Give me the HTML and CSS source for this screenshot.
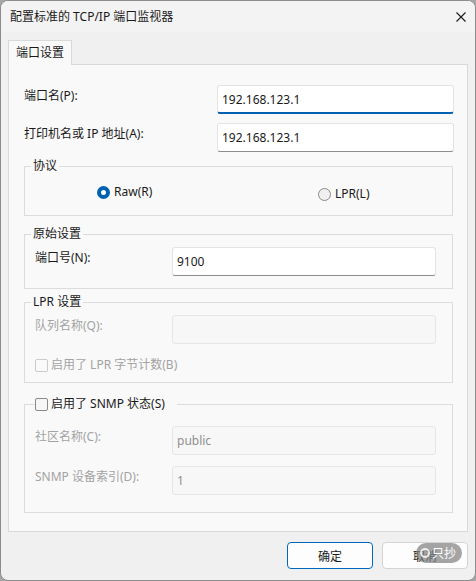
FILE: index.html
```html
<!DOCTYPE html>
<html lang="zh-CN">
<head>
  <meta charset="UTF-8">
  <meta name="viewport" content="width=device-width, initial-scale=1.0">
  <title>配置标准的 TCP/IP 端口监视器</title>
  <link rel="stylesheet" href="styles.css">
</head>
<body>
  <div class="window">
    <div class="titlebar">
      <span class="title">配置标准的 TCP/IP 端口监视器</span>
      <svg class="close" width="10" height="10" viewBox="0 0 10 10">
        <path d="M0.5 0.5 L9.5 9.5 M9.5 0.5 L0.5 9.5" stroke="#1a1a1a" stroke-width="1.1" fill="none"/>
      </svg>
    </div>

    <div class="content">
      <div class="tabs">
        <div class="tab">端口设置</div>
      </div>
      <div class="panel">
        <div class="row row-first">
          <label>端口名(P):</label>
          <div class="input focused">192.168.123.1</div>
        </div>
        <div class="row">
          <label>打印机名或 IP 地址(A):</label>
          <div class="input">192.168.123.1</div>
        </div>

        <fieldset class="group group-proto">
          <legend>协议</legend>
          <div class="radios">
            <div class="radio-item raw"><span class="radio checked"></span>Raw(R)</div>
            <div class="radio-item lpr"><span class="radio"></span>LPR(L)</div>
          </div>
        </fieldset>

        <fieldset class="group group-raw">
          <legend>原始设置</legend>
          <div class="field">
            <label>端口号(N):</label>
            <div class="input">9100</div>
          </div>
        </fieldset>

        <fieldset class="group group-lpr">
          <legend>LPR 设置</legend>
          <div class="field">
            <label class="disabled">队列名称(Q):</label>
            <div class="input disabled"></div>
          </div>
          <div class="check-row disabled"><span class="checkbox"></span>启用了 LPR 字节计数(B)</div>
        </fieldset>

        <fieldset class="group group-snmp">
          <legend><span class="checkbox"></span>启用了 SNMP 状态(S)</legend>
          <div class="field">
            <label class="disabled">社区名称(C):</label>
            <div class="input disabled">public</div>
          </div>
          <div class="field field-gap">
            <label class="disabled">SNMP 设备索引(D):</label>
            <div class="input disabled">1</div>
          </div>
        </fieldset>
      </div>

      <div class="footer">
        <button class="btn btn-default">确定</button>
        <button class="btn">取消</button>
        <div class="stamp"><span class="stamp-dot"></span>只抄</div>
      </div>
    </div>
  </div>
</body>
</html>
```

FILE: styles.css
```css
html {
  background-color: #a6a6a6;
}

body {
  margin: 0;
  font-family: "Noto Sans", "Noto Sans CJK SC", sans-serif;
  font-size: 12px;
  color: #1a1a1a;
}

.window {
  width: 476px;
  height: 581px;
  box-sizing: border-box;
  border: 1px solid #8c8c8c;
  border-radius: 8px;
  background-color: #f0f0f0;
  overflow: hidden;
}

.titlebar {
  height: 31px;
  display: flex;
  align-items: center;
  justify-content: space-between;
  padding: 0 9px 0 9px;
  background-color: #f3f3f3;
}

.title {
  line-height: 16px;
}

.close {
  display: block;
}

.content {
  padding: 8px 7px 0 7px;
}

/* tab strip */
.tabs {
  display: flex;
}

.tab {
  position: relative;
  z-index: 1;
  height: 25px;
  box-sizing: border-box;
  margin-bottom: -1px;
  padding: 0 7px;
  line-height: 24px;
  background-color: #f9f9f9;
  border: 1px solid #d9d9d9;
  border-bottom: none;
}

.panel {
  height: 468px;
  box-sizing: border-box;
  padding: 20px 13px 0 15px;
  background-color: #f9f9f9;
  border: 1px solid #d9d9d9;
}

.row {
  display: grid;
  grid-template-columns: 193px 1fr;
  align-items: start;
  margin-top: 9px;
}

.row-first {
  margin-top: 0;
}

/* labels sit a little above the middle of their edit box */
.row label,
.field label {
  display: block;
  height: 16px;
  margin-top: 3px;
  line-height: 16px;
}

.input {
  height: 29px;
  box-sizing: border-box;
  padding: 0 4px;
  line-height: 27px;
  background-color: #fff;
  border: 1px solid #e3e3e3;
  border-bottom-color: #8d8d8d;
  border-radius: 3px;
}

.input.focused {
  border-bottom: 2px solid #0061b0;
}

.input.disabled {
  background-color: #f7f7f7;
  border-color: #e6e6e6;
  color: #8f8f8f;
}

label.disabled,
.check-row.disabled {
  color: #a3a3a3;
}

/* group boxes */
.group {
  margin: 0 1px 0 0;
  padding: 0 16px 0 10px;
  border: 1px solid #dcdcdc;
  border-radius: 0;
}

/* legend starts at the padding edge, pull it back a bit */
.group legend {
  height: 16px;
  margin-left: -4px;
  padding: 0 2px;
  line-height: 16px;
}

.group-proto {
  margin-top: 6px;
  padding-top: 10px;
  padding-bottom: 15px;
}

.group-raw {
  margin-top: 10px;
  padding-top: 5px;
  padding-bottom: 12px;
}

.group-lpr {
  margin-top: 5px;
  padding-top: 5px;
  padding-bottom: 9px;
}

.group-snmp {
  margin-top: 12px;
  padding-top: 13px;
  padding-bottom: 17px;
}

.group-snmp legend {
  display: flex;
  align-items: center;
  gap: 3px;
  height: 18px;
  margin-left: 0;
  padding: 0 12px 0 0;
  line-height: 18px;
}

.field {
  display: grid;
  grid-template-columns: 137px 1fr;
  align-items: start;
}

.field-gap {
  margin-top: 11px;
}

/* radio buttons */
.radios {
  display: flex;
  height: 16px;
  padding-left: 62px;
}

.radio-item {
  display: flex;
  align-items: center;
  gap: 4px;
  height: 16px;
  line-height: 16px;
}

.raw {
  width: 221px;
}

.lpr {
  margin-top: 2px;
}

.radio {
  width: 13px;
  height: 13px;
  box-sizing: border-box;
  border-radius: 50%;
  border: 1px solid #8a8a8a;
  background-color: #f0f0f0;
}

.radio.checked {
  border: 4px solid #0061b0;
  background-color: #fff;
}

/* check boxes */
.check-row {
  display: flex;
  align-items: center;
  gap: 3px;
  height: 16px;
  margin-top: 13px;
  line-height: 16px;
}

.checkbox {
  width: 13px;
  height: 13px;
  box-sizing: border-box;
  border: 1px solid #8b8b8b;
  border-radius: 2px;
  background-color: #f6f6f6;
}

.check-row.disabled .checkbox {
  border-color: #cbcbcb;
  background-color: #fafafa;
}

/* dialog buttons */
.footer {
  position: relative;
  display: flex;
  justify-content: flex-end;
  gap: 9px;
  margin-top: 10px;
}

.btn {
  width: 86px;
  height: 27px;
  font-family: inherit;
  font-size: 12px;
  color: #1a1a1a;
  background-color: #fdfdfd;
  border: 1px solid #d4d4d4;
  border-radius: 4px;
  padding: 0;
}

.btn-default {
  border-color: #0067c0;
}

.stamp {
  position: absolute;
  top: 1px;
  right: 6px;
  display: flex;
  align-items: center;
  gap: 2px;
  height: 20px;
  padding: 0 6px 0 4px;
  border-radius: 10px;
  background-color: rgba(125, 125, 125, 0.7);
  color: #fff;
  font-size: 12px;
}

.stamp-dot {
  width: 10px;
  height: 10px;
  box-sizing: border-box;
  border: 2px solid rgba(255, 255, 255, 0.8);
  border-radius: 50%;
}
```
